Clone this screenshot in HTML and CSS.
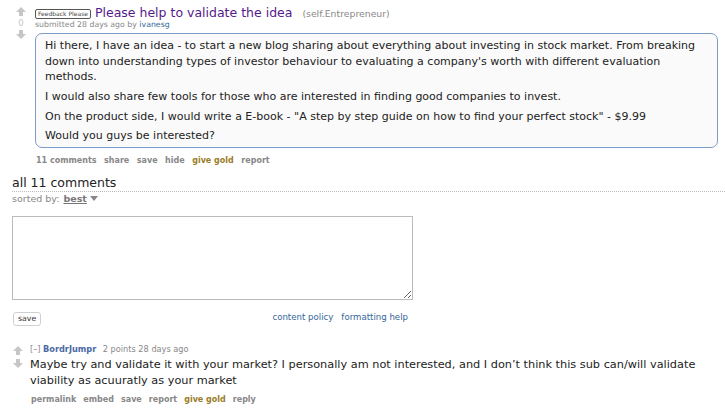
FILE: index.html
```html
<!DOCTYPE html>
<html>
<head>
<meta charset="utf-8">
<link rel="stylesheet" href="styles.css">
</head>
<body>
<div class="post">
  <div class="midcol">
    <svg class="arrow" viewBox="0 0 10 9"><path d="M5 0 L10 5 H7 V9 H3 V5 H0 Z"/></svg>
    <div class="score">0</div>
    <svg class="arrow down" viewBox="0 0 10 9"><path d="M5 0 L10 5 H7 V9 H3 V5 H0 Z"/></svg>
  </div>
  <div class="entry">
    <div class="title-row">
      <span class="flair">Feedback Please</span>
      <a class="title">Please help to validate the idea</a>
      <span class="domain">(self.Entrepreneur)</span>
    </div>
    <div class="tagline">submitted 28 days ago by <a class="author">ivanesg</a></div>
    <div class="selftext">
      <p>Hi there, I have an idea - to start a new blog sharing about everything about investing in stock market. From breaking down into understanding types of investor behaviour to evaluating a company's worth with different evaluation methods.</p>
      <p>I would also share few tools for those who are interested in finding good companies to invest.</p>
      <p>On the product side, I would write a E-book - "A step by step guide on how to find your perfect stock" - $9.99</p>
      <p>Would you guys be interested?</p>
    </div>
    <ul class="buttons">
      <li>11 comments</li>
      <li>share</li>
      <li>save</li>
      <li>hide</li>
      <li class="gold">give gold</li>
      <li>report</li>
    </ul>
  </div>
</div>

<div class="comments-area">
  <div class="panestack-title">all 11 comments</div>
  <div class="sort">sorted by: <span class="best">best</span><span class="dropdown"></span></div>
  <form class="comment-form">
    <textarea class="reply-box"></textarea>
    <div class="form-bottom">
      <button type="button" class="save-btn">save</button>
      <div class="help-links">
        <a>content policy</a>
        <a>formatting help</a>
      </div>
    </div>
  </form>

  <div class="comment">
    <div class="midcol small">
      <svg class="arrow" viewBox="0 0 10 9"><path d="M5 0 L10 5 H7 V9 H3 V5 H0 Z"/></svg>
      <svg class="arrow down" viewBox="0 0 10 9"><path d="M5 0 L10 5 H7 V9 H3 V5 H0 Z"/></svg>
    </div>
    <div class="entry">
      <div class="tagline"><span class="expand">[–]</span> <a class="author bold">BordrJumpr</a> <span class="points">2 points 28 days ago</span></div>
      <div class="comment-body">Maybe try and validate it with your market? I personally am not interested, and I don’t think this sub can/will validate viability as acuuratly as your market</div>
      <ul class="buttons">
        <li>permalink</li>
        <li>embed</li>
        <li>save</li>
        <li>report</li>
        <li class="gold">give gold</li>
        <li>reply</li>
      </ul>
    </div>
  </div>
</div>
</body>
</html>
```
FILE: styles.css
```css
* { box-sizing: border-box; }
body {
  margin: 0;
  background: #fff;
  color: #222;
  font-family: "DejaVu Sans", Verdana, sans-serif;
  width: 725px;
  height: 411px;
  overflow: hidden;
}
a { text-decoration: none; cursor: pointer; }

.post {
  display: flex;
  padding-top: 5px;
}
.midcol {
  width: 14px;
  margin: 0 7px 0 14px;
  padding-top: 2px;
  display: flex;
  flex-direction: column;
  align-items: center;
}
.arrow {
  width: 10px;
  height: 9px;
  fill: #c6c6c6;
  display: block;
  flex: none;
}
.arrow.down { transform: rotate(180deg); }
.score {
  font-size: 8.5px;
  line-height: 14px;
  color: #c6c6c6;
}
.entry { flex: 1; min-width: 0; }

.title-row {
  display: flex;
  align-items: baseline;
  height: 15px;
  line-height: 15px;
  white-space: nowrap;
}
.flair {
  display: inline-block;
  font-size: 6px;
  line-height: 8px;
  padding: 0 2px;
  border: 1px solid #555;
  border-radius: 2px;
  color: #444;
  position: relative;
  top: -1px;
}
.title {
  font-size: 12.5px;
  color: #551a8b;
  margin-left: 4px;
}
.domain {
  font-size: 9.3px;
  color: #888;
  margin-left: 10px;
}
.tagline {
  font-size: 7.8px;
  line-height: 10px;
  color: #888;
}
.author { color: #369; }
.author.bold { font-weight: bold; color: #4a6aa5; }

.selftext {
  margin: 3px 7px 0 0;
  border: 1px solid #7e9cc9;
  border-radius: 7px;
  background: #fafafa;
  padding: 4px 9px 3px;
  font-size: 11px;
  line-height: 15.5px;
}
.selftext p { margin: 0 0 4.3px; }
.selftext p:last-child { margin-bottom: 0; }

.buttons {
  list-style: none;
  margin: 7px 0 0;
  padding: 0 0 0 1px;
  display: flex;
  gap: 7.5px;
  font-size: 8px;
  line-height: 12px;
  font-weight: bold;
  color: #888;
}
.buttons .gold { color: #9a7d2a; }

.comments-area { padding-left: 12px; }
.panestack-title {
  margin-top: 8px;
  font-size: 12.5px;
  line-height: 16px;
  border-bottom: 1px dotted #bbb;
}
.sort {
  margin-top: 1px;
  font-size: 9.5px;
  line-height: 11px;
  color: #888;
  display: flex;
  align-items: center;
}
.best {
  font-weight: bold;
  text-decoration: underline;
  color: #777;
  margin-left: 4px;
}
.dropdown {
  width: 0;
  height: 0;
  margin-left: 3px;
  border-left: 4.5px solid transparent;
  border-right: 4.5px solid transparent;
  border-top: 5px solid #888;
}

.comment-form {
  width: 401px;
  margin-top: 12px;
}
.reply-box {
  display: block;
  width: 401px;
  height: 84px;
  border: 1px solid #bbb;
  background: #fff;
  resize: both;
  margin: 0;
}
.form-bottom {
  margin-top: 12px;
  display: flex;
  justify-content: space-between;
  align-items: center;
  padding-right: 5px;
}
.save-btn {
  margin-left: 1px;
  height: 14px;
  padding: 0 4px;
  font-family: "DejaVu Sans", Verdana, sans-serif;
  font-size: 7.8px;
  color: #333;
  background: #fff;
  border: 1px solid #d0d0d0;
  border-radius: 3px;
}
.help-links {
  display: flex;
  gap: 8px;
  font-size: 8.6px;
  margin-top: -4px;
}
.help-links a { color: #369; }

.comment {
  display: flex;
  margin-top: 17px;
}
.midcol.small {
  width: 11px;
  margin: 0 7px 0 0;
  padding-top: 3px;
  gap: 4px;
}
.expand { color: #888; }
.comment .tagline { line-height: 12px; font-size: 8.2px; }
.points { margin-left: 4px; }
.comment-body {
  margin-top: 2px;
  font-size: 11.3px;
  line-height: 16px;
  max-width: 688px;
}
.comment .buttons { margin-top: 5px; gap: 7px; }
```
